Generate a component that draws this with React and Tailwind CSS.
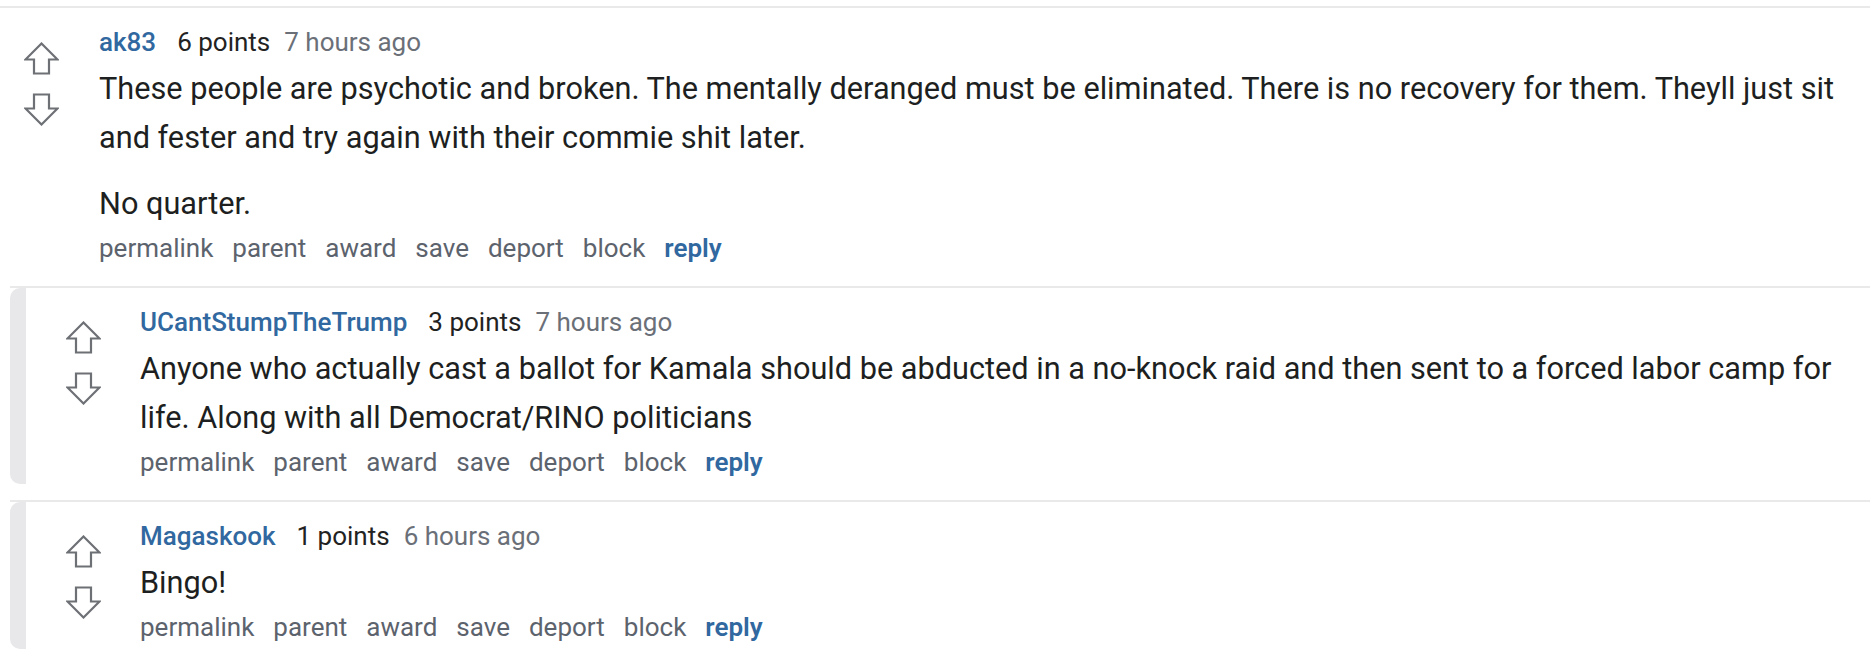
import React from "react";

const comments = [
  {
    id: 1,
    user: "ak83",
    points: "6 points",
    time: "7 hours ago",
    body: [
      "These people are psychotic and broken. The mentally deranged must be eliminated. There is no recovery for them. Theyll just sit and fester and try again with their commie shit later.",
      "No quarter.",
    ],
    nested: false,
  },
  {
    id: 2,
    user: "UCantStumpTheTrump",
    points: "3 points",
    time: "7 hours ago",
    body: [
      "Anyone who actually cast a ballot for Kamala should be abducted in a no-knock raid and then sent to a forced labor camp for life. Along with all Democrat/RINO politicians",
    ],
    nested: true,
  },
  {
    id: 3,
    user: "Magaskook",
    points: "1 points",
    time: "6 hours ago",
    body: ["Bingo!"],
    nested: true,
  },
];

const actions = ["permalink", "parent", "award", "save", "deport", "block"];

function UpArrow() {
  return (
    <svg width="35" height="33" viewBox="0 0 35 33" fill="none">
      <path
        d="M17.5 1.5 L33.5 17.5 H25 V31.5 H10 V17.5 H1.5 Z"
        stroke="#6d7075"
        strokeWidth="2.2"
        strokeLinejoin="miter"
      />
    </svg>
  );
}

function DownArrow() {
  return (
    <svg width="35" height="33" viewBox="0 0 35 33" fill="none">
      <path
        d="M10 1.5 H25 V15.5 H33.5 L17.5 31.5 L1.5 15.5 H10 Z"
        stroke="#6d7075"
        strokeWidth="2.2"
        strokeLinejoin="miter"
      />
    </svg>
  );
}

function CommentBody({ c }) {
  return (
    <div className="flex-1 min-w-0 pt-[14px] pr-[20px]">
      <div className="flex items-baseline text-[26px] leading-[40px]">
        <a className="font-medium text-[#30689f] mr-[21px]">{c.user}</a>
        <span className="text-[#222222] mr-[14px]">{c.points}</span>
        <span className="text-[#6b7078]">{c.time}</span>
      </div>
      <div className="mt-[2px] text-[30.7px] leading-[49px] text-[#1d1f21]">
        {c.body.map((p, i) => (
          <p key={i} className={i > 0 ? "mt-[17px]" : ""}>
            {p}
          </p>
        ))}
      </div>
      <div className="mt-[2px] flex gap-[19px] text-[26px] leading-[36px] text-[#5c636d]">
        {actions.map((a) => (
          <span key={a}>{a}</span>
        ))}
        <span className="font-semibold text-[#30689f]">reply</span>
      </div>
    </div>
  );
}

function Votes() {
  return (
    <div className="flex flex-col gap-[18px]">
      <UpArrow />
      <DownArrow />
    </div>
  );
}

export default function App() {
  return (
    <div className="min-h-screen bg-white pt-[6px] font-[Roboto,sans-serif]">
      {/* top-level comment */}
      <div className="border-t-2 border-[#e9e9e9] flex pb-[20px]">
        <div className="w-[99px] shrink-0 pl-[24px] pt-[34px]">
          <Votes />
        </div>
        <CommentBody c={comments[0]} />
      </div>

      {/* replies */}
      {comments
        .filter((c) => c.nested)
        .map((c) => (
          <div key={c.id} className="ml-[10px] border-t-2 border-[#e9e9e9] pb-[16px]">
            <div className="flex rounded-l-[10px] border-l-[16px] border-[#e8e8ea] pb-[4px]">
              <div className="w-[114px] shrink-0 pl-[40px] pt-[33px]">
                <Votes />
              </div>
              <CommentBody c={c} />
            </div>
          </div>
        ))}
    </div>
  );
}
